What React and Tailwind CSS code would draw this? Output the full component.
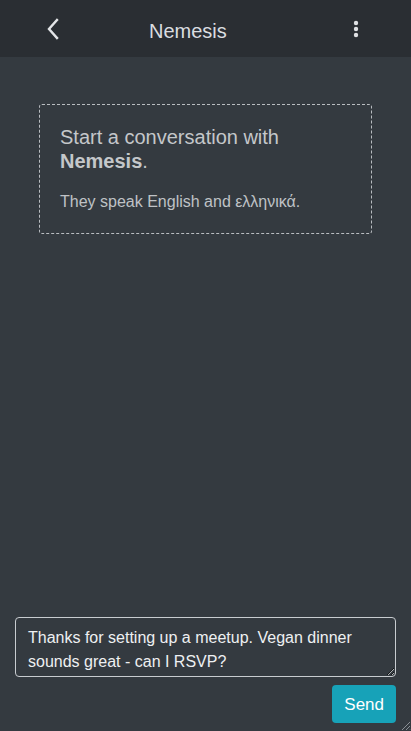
import React, { useState } from 'react';

const BackIcon = () => (
    <svg width="14" height="22" viewBox="0 0 14 22" fill="none">
        <path d="M11 2 L3 11 L11 20" stroke="#e3e5e8" strokeWidth="2.4" strokeLinecap="square" />
    </svg>
);

const MoreIcon = () => (
    <svg width="6" height="18" viewBox="0 0 6 18" fill="#dfe1e4">
        <circle cx="3" cy="3" r="2.2" />
        <circle cx="3" cy="9" r="2.2" />
        <circle cx="3" cy="15" r="2.2" />
    </svg>
);

const Grip = () => (
    <svg width="12" height="12" viewBox="0 0 12 12" className="absolute right-0 bottom-0">
        <path d="M11 3 L3 11 M11 7 L7 11 M11 10.5 L10.5 11" stroke="#8a8f95" strokeWidth="1" />
    </svg>
);

export default function App() {
    const [message, setMessage] = useState('Thanks for setting up a meetup. Vegan dinner sounds great - can I RSVP?');

    return (
        <div className="relative flex h-[731px] flex-col bg-[#343a40] font-['Liberation_Sans',Arial,sans-serif]">
            {/* Header */}
            <header className="flex h-[57px] items-center bg-[#2a2e33] pl-[46px] pr-[52px]">
                <button className="flex items-center">
                    <BackIcon />
                </button>
                <h1 className="ml-[89px] pt-[4px] text-[20px] text-[#dadde0]">Nemesis</h1>
                <button className="ml-auto flex items-center">
                    <MoreIcon />
                </button>
            </header>

            {/* Conversation */}
            <main className="flex-1 px-[39px] pt-[47px]">
                <div className="rounded-[3px] border border-dashed border-[#b9bdc1] px-[20px] pt-[20px] pb-[19px]">
                    <p className="text-[20px] leading-[24px] text-[#c4c7ca]">
                        Start a conversation with <b className="font-bold">Nemesis</b>.
                    </p>
                    <p className="mt-[17px] text-[16px] text-[#bfc2c6]">They speak English and ελληνικά.</p>
                </div>
            </main>

            {/* Composer */}
            <footer className="flex flex-col items-end gap-[8px] px-[15px] pb-[8px]">
                <textarea
                    value={message}
                    onChange={(e) => setMessage(e.target.value)}
                    rows={2}
                    className="h-[60px] w-full resize-y rounded-[4px] border border-[#c8ccd0] bg-[#343a40] px-[12px] pt-[8px] text-[16px] leading-[24px] text-[#eef0f2] outline-none"
                />
                <button className="h-[38px] rounded-[4px] bg-[#17a2b8] px-[12px] pt-[1px] text-[17px] text-white">Send</button>
            </footer>
            <Grip />
        </div>
    );
}
